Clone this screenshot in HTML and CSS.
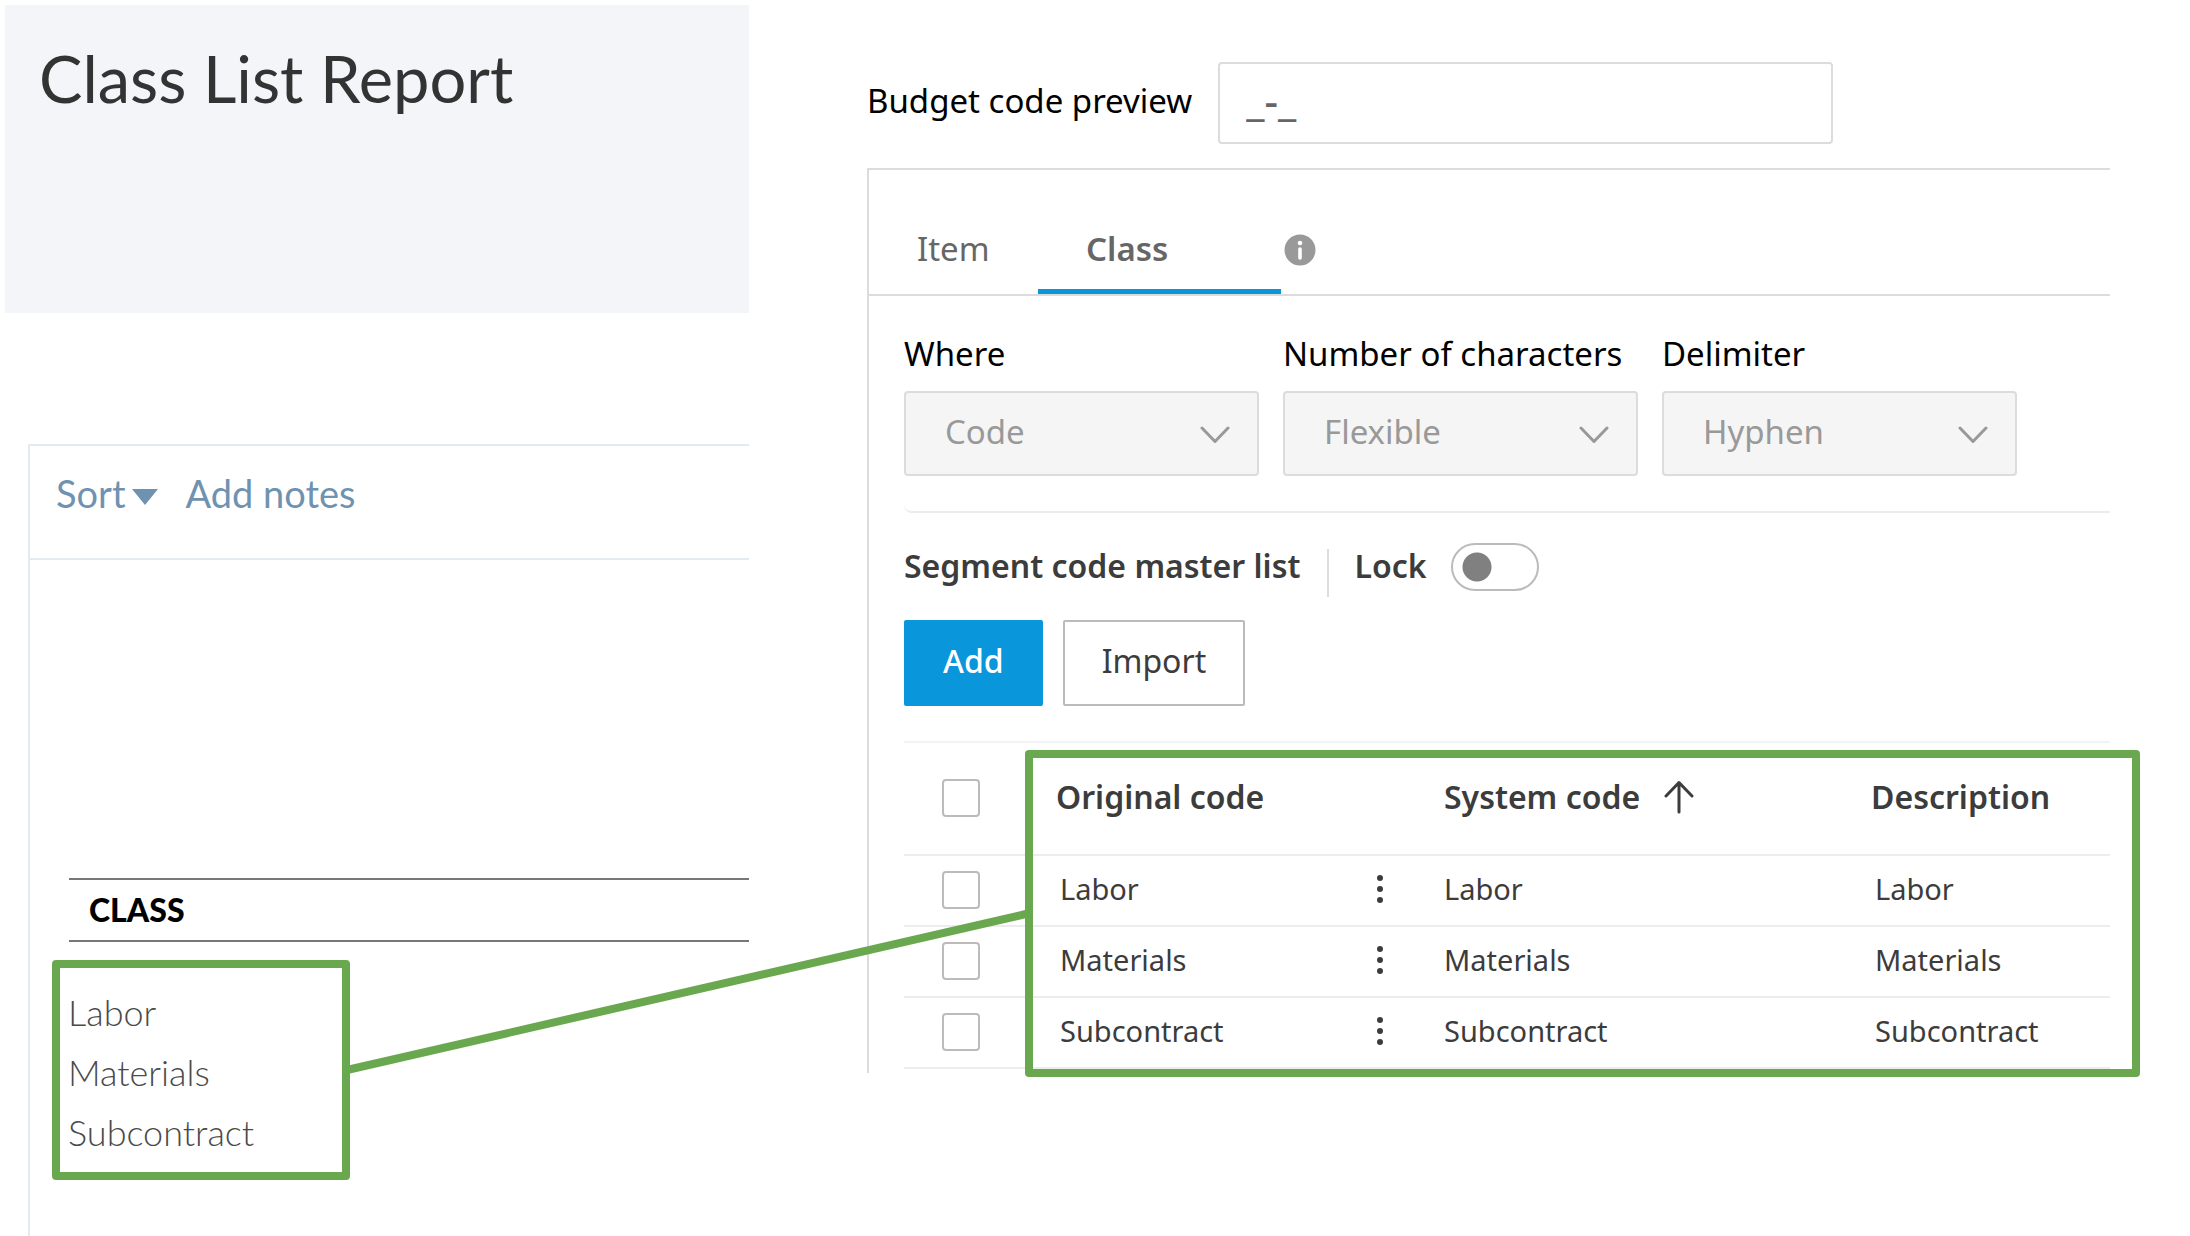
FILE: index.html
```html
<!DOCTYPE html>
<html lang="en">
<head>
<meta charset="utf-8">
<meta name="viewport" content="width=device-width, initial-scale=1">
<title>Class List Report</title>
<link rel="stylesheet" href="styles.css">
</head>
<body>
<main class="page">
  <section class="report">
    <header class="report-header">
      <h1 class="report-title">Class List Report</h1>
    </header>
    <div class="report-card">
      <div class="report-toolbar">
        <button type="button" class="link-button">Sort<svg class="caret" viewBox="0 0 26 16" aria-hidden="true"><path d="M0 0h26L13 16z"/></svg></button>
        <button type="button" class="link-button">Add notes</button>
      </div>
      <h2 class="list-heading">CLASS</h2>
      <ul class="class-list">
        <li>Labor</li>
        <li>Materials</li>
        <li>Subcontract</li>
      </ul>
    </div>
  </section>

  <section class="budget">
    <div class="preview">
      <label class="preview-label" for="preview">Budget code preview</label>
      <input class="preview-input" id="preview" type="text" value="_-_" readonly>
    </div>

    <div class="panel">
      <div class="tabs" role="tablist">
        <button type="button" class="tab tab-item" role="tab" aria-selected="false">Item</button>
        <button type="button" class="tab tab-class" role="tab" aria-selected="true">Class</button>
        <svg class="info" viewBox="0 0 32 32" role="img" aria-label="Info"><circle cx="16" cy="16" r="15.5" fill="#999"/><circle cx="16" cy="9" r="2.3" fill="#fff"/><path d="M16 15v9" stroke="#fff" stroke-width="3.6" stroke-linecap="round"/></svg>
      </div>

      <div class="panel-body">
        <div class="fields">
          <div class="field">
            <label for="where">Where</label>
            <div class="select-wrap">
              <select id="where" disabled><option>Code</option></select>
              <svg class="chevron" viewBox="0 0 30 18" aria-hidden="true"><path d="M2 2l13 13.500L28 2"/></svg>
            </div>
          </div>
          <div class="field">
            <label for="chars">Number of characters</label>
            <div class="select-wrap">
              <select id="chars" disabled><option>Flexible</option></select>
              <svg class="chevron" viewBox="0 0 30 18" aria-hidden="true"><path d="M2 2l13 13.500L28 2"/></svg>
            </div>
          </div>
          <div class="field">
            <label for="delimiter">Delimiter</label>
            <div class="select-wrap">
              <select id="delimiter" disabled><option>Hyphen</option></select>
              <svg class="chevron" viewBox="0 0 30 18" aria-hidden="true"><path d="M2 2l13 13.500L28 2"/></svg>
            </div>
          </div>
        </div>

        <div class="list-head">
          <h2 class="list-title">Segment code master list</h2>
          <label class="lock-label" for="lock">Lock</label>
          <input class="toggle" id="lock" type="checkbox" role="switch">
        </div>

        <div class="actions">
          <button type="button" class="button button-primary">Add</button>
          <button type="button" class="button">Import</button>
        </div>

        <div class="table-wrap">
          <table class="codes">
            <colgroup><col class="col-check"><col class="col-original"><col class="col-system"><col></colgroup>
            <thead>
              <tr>
                <th class="check-cell"><input class="check" type="checkbox" aria-label="Select all"></th>
                <th scope="col">Original code</th>
                <th scope="col" aria-sort="ascending"><span class="sorted">System code<svg class="arrow" viewBox="0 0 30 34" aria-hidden="true"><path d="M15 32V3M2 16L15 2.500L28 16"/></svg></span></th>
                <th scope="col">Description</th>
              </tr>
            </thead>
            <tbody>
              <tr>
                <td class="check-cell"><input class="check" type="checkbox" aria-label="Select Labor"></td>
                <td class="inset"><div class="code">Labor<button type="button" class="more" aria-label="More actions for Labor"><svg viewBox="0 0 20 30" aria-hidden="true"><circle cx="10" cy="4" r="3"/><circle cx="10" cy="15" r="3"/><circle cx="10" cy="26" r="3"/></svg></button></div></td>
                <td>Labor</td>
                <td class="inset">Labor</td>
              </tr>
              <tr>
                <td class="check-cell"><input class="check" type="checkbox" aria-label="Select Materials"></td>
                <td class="inset"><div class="code">Materials<button type="button" class="more" aria-label="More actions for Materials"><svg viewBox="0 0 20 30" aria-hidden="true"><circle cx="10" cy="4" r="3"/><circle cx="10" cy="15" r="3"/><circle cx="10" cy="26" r="3"/></svg></button></div></td>
                <td>Materials</td>
                <td class="inset">Materials</td>
              </tr>
              <tr>
                <td class="check-cell"><input class="check" type="checkbox" aria-label="Select Subcontract"></td>
                <td class="inset"><div class="code">Subcontract<button type="button" class="more" aria-label="More actions for Subcontract"><svg viewBox="0 0 20 30" aria-hidden="true"><circle cx="10" cy="4" r="3"/><circle cx="10" cy="15" r="3"/><circle cx="10" cy="26" r="3"/></svg></button></div></td>
                <td>Subcontract</td>
                <td class="inset">Subcontract</td>
              </tr>
            </tbody>
          </table>
          <div class="highlight"></div>
        </div>
      </div>
    </div>
  </section>

  <svg class="connector" viewBox="0 0 100 100" preserveAspectRatio="none" aria-hidden="true"><path d="M0 100L100 0" vector-effect="non-scaling-stroke"/></svg>
</main>
</body>
</html>
```
FILE: styles.css
```css
*,
*::before,
*::after {
  box-sizing: border-box;
}

body {
  margin: 0;
  background: #fff;
  color: #000;
  font: 400 33px/44px "Noto Sans", sans-serif;
}

h1, h2, ul {
  margin: 0;
  padding: 0;
}

button, input, select {
  margin: 0;
  font: inherit;
  color: inherit;
}

.page {
  position: relative;
  display: grid;
  grid-template-columns: 744fr 1243fr;
  column-gap: 118px;
  min-height: 100vh;
  padding: 5px 80px 0 5px;
}

/* Report */
.report {
  display: flex;
  flex-direction: column;
  font-family: Lato, sans-serif;
}

.report-header {
  min-height: 308px;
  padding: 33px 34px;
  background: #f4f5f9;
}

.report-title {
  color: #333;
  font-size: 65px;
  font-weight: 400;
  line-height: 80px;
}

.report-card {
  flex: 1;
  margin: 131px 0 0 23px;
  border: solid #e2eaf4;
  border-width: 2px 0 0 2px;
}

.report-toolbar {
  display: flex;
  gap: 28px;
  height: 114px;
  padding: 23px 26px;
  border-bottom: 2px solid #e2eaf4;
}

.link-button {
  display: flex;
  align-items: center;
  gap: 6px;
  height: 48px;
  padding: 0;
  border: 0;
  background: none;
  color: #7092b1;
  font-size: 38px;
  line-height: 48px;
}

.caret {
  width: 26px;
  height: 16px;
  margin-top: 8px;
  fill: #7092b1;
}

.list-heading {
  margin: 318px 0 0 39px;
  padding: 1px 20px;
  border: solid #777;
  border-width: 2px 0;
  font-size: 32px;
  font-weight: 900;
  line-height: 58px;
}

.class-list {
  width: 298px;
  margin: 18px 0 0 22px;
  padding: 14px 8px 10px;
  border: 8px solid #6aa84f;
  border-radius: 4px;
  color: #4a4a4a;
  font-size: 36px;
  font-weight: 300;
  line-height: 60px;
  list-style: none;
}

/* Budget code setup */
.budget {
  min-width: 0;
  padding-top: 57px;
}

.preview {
  display: flex;
  align-items: center;
  gap: 26px;
}

.preview-label {
  padding-bottom: 4px;
}

.preview-input {
  flex: 0 1 615px;
  min-width: 0;
  height: 82px;
  padding: 0 26px 8px;
  border: 2px solid #dcdcdc;
  border-radius: 4px;
  background: #fff;
  color: #666;
  font-size: 42px;
  font-weight: 500;
}

.panel {
  margin-top: 24px;
  border: solid #dcdcdc;
  border-width: 2px 0 0 2px;
}

.tabs {
  display: flex;
  align-items: flex-end;
  height: 126px;
  border-bottom: 2px solid #dcdcdc;
}

.tab {
  height: 71px;
  padding: 2px 48px 16px;
  border: 0;
  border-bottom: 5px solid transparent;
  background: none;
  color: #666;
  line-height: 48px;
  text-align: left;
}

.tab-item {
  width: 169px;
}

.tab-class {
  width: 243px;
  border-color: #0a96db;
  font-weight: 600;
}

.info {
  width: 32px;
  height: 32px;
  margin: 0 0 28px 3px;
}

.panel-body {
  padding: 36px 0 4px 35px;
}

.fields {
  display: grid;
  grid-template-columns: repeat(3, minmax(0, 355px));
  gap: 24px;
  padding-bottom: 35px;
  border-bottom: 2px solid #ededed;
  border-bottom-left-radius: 8px;
}

.field {
  display: flex;
  flex-direction: column;
  gap: 15px;
}

.select-wrap {
  position: relative;
}

.select-wrap select {
  display: block;
  width: 100%;
  height: 85px;
  padding: 0 64px 3px 39px;
  border: 2px solid #dcdcdc;
  border-radius: 4px;
  background: #f5f5f5;
  color: #999;
  opacity: 1;
  appearance: none;
}

.chevron {
  position: absolute;
  top: 35px;
  right: 29px;
  width: 30px;
  height: 18px;
  fill: none;
  stroke: #999;
  stroke-width: 3;
  stroke-linecap: round;
  stroke-linejoin: round;
}

.list-head {
  display: flex;
  align-items: flex-start;
  margin-top: 30px;
  color: #3c3c3c;
  font-size: 32px;
  font-weight: 600;
  line-height: 46px;
}

.list-title {
  font: inherit;
}

.lock-label {
  display: flex;
}

.lock-label::before {
  content: "";
  height: 48px;
  margin: 6px 25px 0 27px;
  border-left: 2px solid #dcdcdc;
}

.toggle {
  width: 88px;
  height: 48px;
  margin-left: 24px;
  border: 2px solid #bbb;
  border-radius: 24px;
  background: radial-gradient(circle at 24px 22px, #808080 14px, transparent 15px);
  appearance: none;
}

.actions {
  display: flex;
  gap: 20px;
  margin-top: 23px;
}

.button {
  height: 86px;
  padding: 0 37px 4px;
  border: 2px solid #bbb;
  border-radius: 2px;
  background: #fff;
  color: #3c3c3c;
  font-size: 32px;
}

.button-primary {
  border-color: #0a96db;
  background: #0a96db;
  color: #fff;
  font-weight: 500;
}

.table-wrap {
  position: relative;
  margin-top: 35px;
}

.codes {
  width: 100%;
  border-collapse: separate;
  border-spacing: 0;
  border-top: 2px solid #f3f3f3;
  table-layout: fixed;
  color: #3c3c3c;
  text-align: left;
}

.col-check {
  width: 152px;
}

.col-original {
  width: 388px;
}

.col-system {
  width: 427px;
}

.codes th,
.codes td {
  padding: 0;
  border-bottom: 2px solid #ededed;
  vertical-align: middle;
}

.codes th {
  height: 113px;
  padding-bottom: 4px;
  font-size: 32px;
  font-weight: 600;
}

.codes td {
  height: 71px;
  padding-bottom: 4px;
  font-size: 29px;
}

.codes td.inset {
  padding-left: 4px;
}

.codes .check-cell {
  padding: 0 0 2px 38px;
}

.check {
  display: block;
  width: 38px;
  height: 38px;
  border: 2px solid #bbb;
  border-radius: 4px;
  background: #fff;
  appearance: none;
}

.sorted {
  display: flex;
  align-items: center;
  gap: 24px;
}

.arrow {
  width: 30px;
  height: 34px;
  fill: none;
  stroke: #3c3c3c;
  stroke-width: 3;
  stroke-linecap: round;
  stroke-linejoin: round;
}

.code {
  display: flex;
  align-items: center;
  justify-content: space-between;
  padding-right: 54px;
}

.more {
  width: 20px;
  height: 30px;
  padding: 0;
  border: 0;
  background: none;
}

.more svg {
  display: block;
  width: 20px;
  height: 30px;
  fill: #3c3c3c;
}

.highlight {
  position: absolute;
  inset: 9px -30px -8px 121px;
  border: 8px solid #6aa84f;
  border-radius: 4px;
  pointer-events: none;
}

/* Line joining the class list to the code table */
.connector {
  position: absolute;
  top: 914px;
  left: 347px;
  width: 31%;
  height: 156px;
  overflow: visible;
  fill: none;
  stroke: #6aa84f;
  stroke-width: 8;
  pointer-events: none;
}
```
